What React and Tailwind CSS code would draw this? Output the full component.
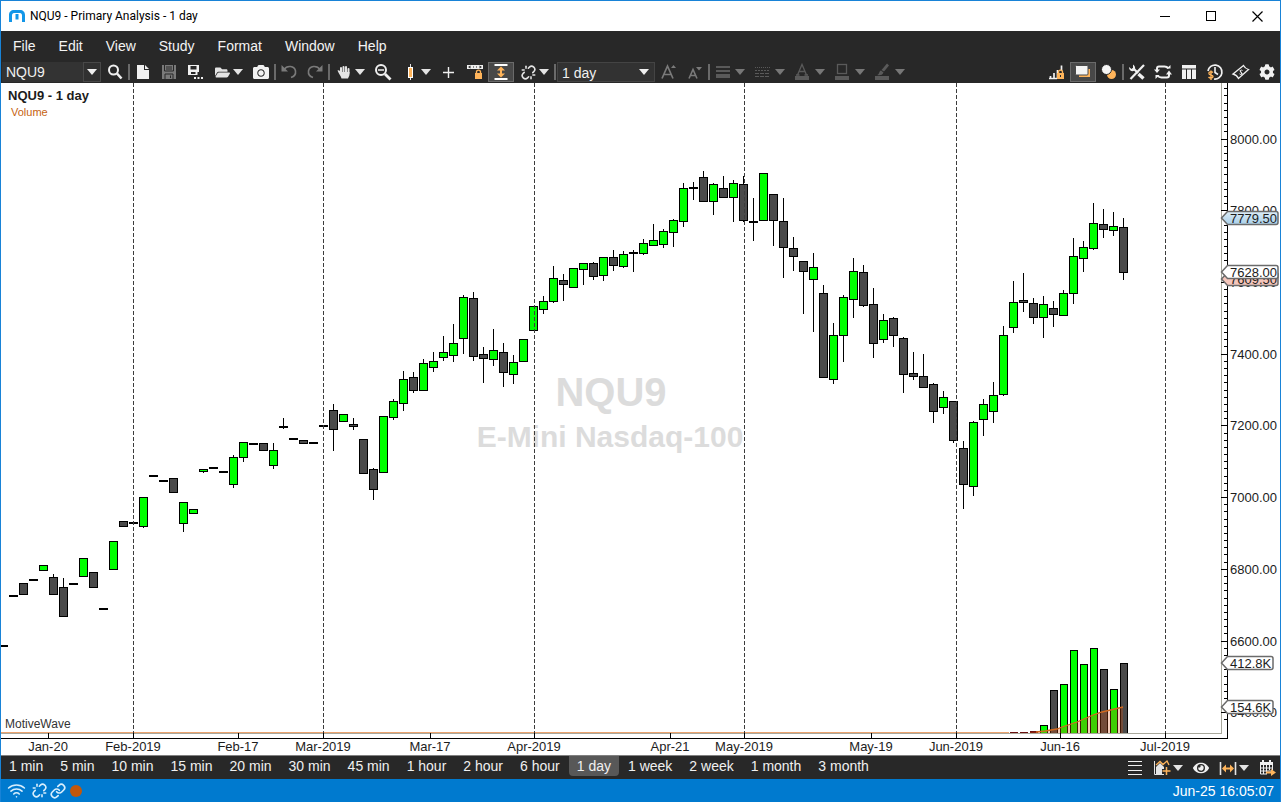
import { useState } from 'react'
import { Link, Unlink, Wifi } from 'lucide-react'
import { FaCamera, FaCog, FaEye, FaFolderOpen } from 'react-icons/fa'

const MENUS = ['File', 'Edit', 'View', 'Study', 'Format', 'Window', 'Help']

const TIMEFRAMES = [
  '1 min', '5 min', '10 min', '15 min', '20 min', '30 min', '45 min',
  '1 hour', '2 hour', '6 hour', '1 day', '1 week', '2 week', '1 month', '3 month',
]

// one bar every 10 units: [kind, body top, body bottom, high, low]
// u = up, d = down, x = open equals close
const BARS = [
  ['x', 645, 647], ['x', 595, 597], ['d', 583, 595], ['x', 579, 581], ['u', 565, 571],
  ['d', 577, 595, 574], ['d', 587, 617, 578], ['x', 583, 585], ['u', 558, 577], ['d', 572, 588],
  ['x', 608, 610], ['u', 541, 570], ['d', 521, 527], ['x', 522, 524], ['u', 497, 527, 497, 528],
  ['x', 475, 477], ['x', 480, 482], ['d', 478, 493], ['u', 502, 524, 502, 532], ['u', 509, 514],
  ['u', 469, 472, 469, 473], ['x', 467, 469], ['x', 471, 473], ['u', 457, 485, 455, 488], ['u', 442, 458, 442, 462],
  ['x', 443, 445], ['d', 443, 451], ['u', 450, 466, 443, 469], ['x', 426, 428, 418, 429], ['x', 438, 440],
  ['d', 440, 444], ['x', 442, 444], ['x', 425, 427], ['d', 410, 430, 404, 451], ['u', 414, 422],
  ['d', 424, 427, 418, 430], ['d', 439, 474], ['d', 469, 490, 468, 500], ['u', 416, 473], ['u', 401, 418, 399, 420],
  ['u', 379, 404, 371, 411], ['d', 377, 391, 372, 393], ['u', 363, 391, 359], ['u', 361, 368, 352, 372], ['u', 352, 358, 336, 361],
  ['u', 343, 356, 324, 362], ['u', 297, 339, 295, 354], ['d', 298, 357, 292, 361], ['d', 354, 359, 347, 383], ['u', 350, 360, 329, 366],
  ['d', 352, 373, 343, 387], ['u', 362, 375, 355, 384], ['u', 339, 362], ['u', 306, 331], ['u', 301, 310, 296, 314],
  ['u', 278, 302, 266, 303], ['d', 280, 285, 274, 301], ['u', 268, 288], ['u', 263, 270, 263, 285], ['d', 263, 277, 262, 280],
  ['u', 257, 276, 257, 281], ['d', 257, 266, 250, 271], ['u', 254, 267, 251, 268], ['x', 252, 254, 250, 272], ['u', 243, 254, 239, 255],
  ['u', 240, 246, 224], ['u', 231, 245, 229, 248], ['u', 220, 233, 219, 247], ['u', 188, 222, 183, 227], ['x', 187, 189, 182, 200],
  ['d', 177, 202, 171], ['u', 184, 202, 183, 215], ['d', 188, 198, 176], ['u', 183, 198, 180, 222], ['d', 184, 221, 176, 222],
  ['x', 221, 223, 198, 241], ['u', 173, 221], ['d', 194, 221, 194, 246], ['d', 221, 248, 198, 278], ['d', 248, 257, 237, 271],
  ['d', 261, 272, 261, 314], ['u', 267, 280, 253, 332], ['d', 293, 378, 285], ['u', 335, 380, 323, 384], ['u', 297, 336, 295, 362],
  ['u', 271, 300, 258, 318], ['d', 272, 306, 265, 307], ['d', 304, 344, 288, 358], ['u', 320, 340, 314, 343], ['d', 318, 336, 317, 347],
  ['d', 338, 375, 337, 393], ['d', 373, 377, 352, 380], ['d', 376, 388, 354], ['d', 384, 412, 383, 423], ['u', 397, 408, 391, 414],
  ['d', 401, 441, 401, 443], ['d', 448, 485, 441, 509], ['u', 422, 487, 421, 496], ['u', 404, 420, 399, 436], ['u', 395, 412, 382, 423],
  ['u', 335, 395, 326, 396], ['u', 302, 328, 281, 333], ['d', 300, 303, 273, 312], ['d', 303, 318, 298, 324], ['u', 304, 318, 296, 338],
  ['d', 308, 315, 301, 327], ['u', 293, 316, 290], ['u', 256, 294, 238, 304], ['u', 247, 259, 241, 272], ['u', 223, 249, 203, 250],
  ['d', 224, 230, 209, 238], ['u', 226, 231, 212, 236], ['d', 227, 273, 218, 280],
]

const VOLUME = [
  [1040, 725, 'u'], [1050, 690, 'd'], [1060, 684, 'u'], [1070, 650, 'u'], [1080, 664, 'u'],
  [1090, 648, 'u'], [1100, 669, 'd'], [1110, 689, 'u'], [1120, 663, 'd'],
]

const DATES = [
  [48, 'Jan-20'], [133, 'Feb-2019', true], [238, 'Feb-17'], [323, 'Mar-2019', true],
  [430, 'Mar-17'], [534, 'Apr-2019', true], [670, 'Apr-21'], [744, 'May-2019', true],
  [871, 'May-19'], [956, 'Jun-2019', true], [1060, 'Jun-16'], [1165, 'Jul-2019', true],
]

const COLORS = { u: '#00ff00', d: '#4a4a4a' }

const priceY = (price) => Math.floor(139 + (8000 - price) * 0.3586)

const PRICE_TICKS = []
for (let p = 8140; p >= 6380; p -= 20) PRICE_TICKS.push(p)

function Candle({ x, bar }) {
  const [kind, top, bottom, high = top, low = bottom] = bar
  return (
    <g>
      {low - high > bottom - top && <rect x={x} y={high} width="1" height={low - high} fill="#000" />}
      {kind === 'x' ? (
        <rect x={x - 4} y={top} width="9" height="2" fill="#000" />
      ) : (
        <rect x={x - 3.5} y={top + 0.5} width="8" height={bottom - top - 1} fill={COLORS[kind]} stroke="#000" />
      )}
    </g>
  )
}

function PriceTag({ y, right, fill, children }) {
  return (
    <g>
      <path
        d={`M1221.5 ${y + 7} L1227.5 ${y + 0.5} H${right - 2} Q${right} ${y + 0.5} ${right} ${y + 2.5} V${y + 11.5} Q${right} ${y + 13.5} ${right - 2} ${y + 13.5} H1227.5 Z`}
        fill={fill}
        stroke="#6b6b6b"
        strokeWidth="1.5"
      />
      <text x="1230" y={y + 12}>{children}</text>
    </g>
  )
}

function Chart() {
  return (
    <svg
      viewBox="1 83 1279 672"
      className="block w-full h-auto bg-white font-['Liberation_Sans',Arial,sans-serif] text-[13px]"
      role="img"
      aria-label="NQU9 daily chart"
    >
      <defs>
        <linearGradient id="bid" x1="0" y1="0" x2="0" y2="1">
          <stop offset="0" stopColor="#dcedf7" />
          <stop offset="1" stopColor="#a9cfe8" />
        </linearGradient>
      </defs>

      {/* Watermark */}
      <g fill="#dcdcdc" fontWeight="bold" textAnchor="middle">
        <text x="611" y="406" fontSize="40">NQU9</text>
        <text x="610" y="447" fontSize="30">E-Mini Nasdaq-100</text>
      </g>

      <g shapeRendering="crispEdges">
        {/* Volume */}
        <rect x="1010" y="732" width="8" height="1" fill="#6a1010" />
        <rect x="1020" y="732" width="8" height="1" fill="#6a1010" />
        <rect x="1030" y="731" width="8" height="2" fill="#6a1010" />
        {VOLUME.map(([x, top, kind]) => (
          <rect key={x} x={x + 0.5} y={top + 0.5} width="7" height={733 - top} fill={COLORS[kind]} stroke="#000" />
        ))}
        <rect x="1" y="733" width="1221" height="1" fill="#a8a89c" />
        <rect x="1" y="732" width="1008" height="1" fill="#eca36f" />
        <rect x="1221" y="83" width="1" height="651" fill="#a8a89c" />
      </g>
      <path d="M1030 732 L1045 731 L1057 729 L1062 727 L1077 722 L1093 715 L1102 712 L1123 707 V733 H1030 Z" fill="#e05010" fillOpacity="0.28" />
      <path d="M1036 732 L1045 731 L1057 729 L1062 727 L1077 722 L1093 715 L1102 712 L1123 707" fill="none" stroke="#d2691e" strokeWidth="1.3" />

      <g shapeRendering="crispEdges">
        {BARS.map((bar, i) => (
          <Candle key={i} x={i * 10 + 3} bar={bar} />
        ))}

        {/* Month lines */}
        {DATES.filter((d) => d[2]).map(([x]) => (
          <line key={x} x1={x + 0.5} x2={x + 0.5} y1="83" y2="733" stroke="#3c3c3c" strokeDasharray="4 2" />
        ))}

        {/* Axes */}
        <rect x="1227" y="83" width="1" height="656" fill="#000" />
        <rect x="1" y="738" width="1227" height="1" fill="#000" />
        {PRICE_TICKS.map((p) => (
          <rect
            key={p}
            x={p % 200 === 0 ? 1221 : 1224}
            y={priceY(p)}
            width={p % 200 === 0 ? 6 : 3}
            height="1"
            fill="#000"
          />
        ))}
        {DATES.map(([x]) => (
          <rect key={x} x={x} y="733" width="1" height="5" fill="#000" />
        ))}
      </g>

      <g fill="#1c1c1c">
        {DATES.map(([x, label]) => (
          <text key={label} x={x} y="751" textAnchor="middle">{label}</text>
        ))}
        {PRICE_TICKS.filter((p) => p % 200 === 0).map((p) => (
          <text key={p} x="1230" y={priceY(p) + 5}>{p}.00</text>
        ))}

        <PriceTag y={211} right={1278} fill="url(#bid)">7779.50</PriceTag>
        <PriceTag y={272} right={1278} fill="#f5c6bb">7609.50</PriceTag>
        <PriceTag y={265} right={1278} fill="#fff">7628.00</PriceTag>
        <PriceTag y={656} right={1273} fill="#fff">412.8K</PriceTag>
        <PriceTag y={700} right={1273} fill="#fff">154.6K</PriceTag>

        <text x="8" y="100" fontWeight="bold">NQU9 - 1 day</text>
        <text x="11" y="116" fontSize="11" fill="#c66210">Volume</text>
        <text x="5" y="728" fontSize="12" fill="#333">MotiveWave</text>
      </g>
    </svg>
  )
}

function Icon({ children, className = '' }) {
  return (
    <svg width="20" height="20" viewBox="0 0 20 20" fill="none" className={`shrink-0 ${className}`}>
      {children}
    </svg>
  )
}

function IconButton({ label, active, children }) {
  return (
    <button
      type="button"
      aria-label={label}
      className={`flex items-center justify-center w-[26px] h-5 shrink-0 overflow-hidden ${
        active ? 'bg-[#484848] border border-[#6a6a6a]' : ''
      }`}
    >
      {children}
    </button>
  )
}

// icon with a drop-down arrow beside it
function MenuButton({ label, disabled, children }) {
  return (
    <button
      type="button"
      aria-label={label}
      disabled={disabled}
      className={`flex items-center gap-px w-10 h-5 pl-1 shrink-0 ${disabled ? 'text-[#777]' : 'text-[#e4e4e4]'}`}
    >
      <span className={`flex justify-center w-5 shrink-0 ${disabled ? 'text-[#5a5a5a]' : ''}`}>{children}</span>
      <Arrow />
    </button>
  )
}

function Arrow() {
  return (
    <svg width="10" height="6" viewBox="0 0 10 6" fill="currentColor" className="shrink-0">
      <path d="M0 0h10L5 6z" />
    </svg>
  )
}

function Separator() {
  return <div className="w-0.5 h-4 bg-[#6a6a6a] shrink-0" />
}

function TitleBar() {
  return (
    <header className="flex items-center h-[30px] bg-white text-black">
      <svg width="16" height="13" viewBox="0 0 16 13" className="ml-2" fill="#1296e8">
        <path d="M0 12V5C0 2 2 0 5 0h6c3 0 5 2 5 5v7h-3V5.500C13 4 12.200 3 11 3H5C3.800 3 3 4 3 5.500V12z" />
        <rect x="6.500" y="4" width="3" height="5.500" />
      </svg>
      <h1 className="ml-[5px] flex-1 text-xs font-[Roboto,'Open_Sans',sans-serif]">
        NQU9 - Primary Analysis - 1 day
      </h1>
      <button type="button" aria-label="Minimize" className="flex justify-center w-[46px]">
        <svg width="11" height="11" shapeRendering="crispEdges"><path d="M0 5.500h10" stroke="#000" /></svg>
      </button>
      <button type="button" aria-label="Maximize" className="flex justify-center w-[46px]">
        <svg width="11" height="11" shapeRendering="crispEdges"><path d="M.5.500h9v9h-9z" fill="none" stroke="#000" /></svg>
      </button>
      <button type="button" aria-label="Close" className="flex justify-center w-[46px]">
        <svg width="11" height="11"><path d="M.5.500l10 10M10.500.500l-10 10" stroke="#000" strokeWidth="1.200" /></svg>
      </button>
    </header>
  )
}

function Toolbar({ timeframe, onTimeframe }) {
  const [symbol, setSymbol] = useState('NQU9')

  return (
    <div className="flex items-center h-[23px] pt-px bg-[#282828] text-[#f0f0f0] text-sm">
      <div className="flex h-5 w-[99px] mr-px ml-px shrink-0">
        <input
          aria-label="Symbol"
          value={symbol}
          onChange={(e) => setSymbol(e.target.value)}
          className="flex-1 min-w-0 pl-1 bg-[#333] outline-none"
        />
        <button type="button" aria-label="Recent symbols"
          className="flex items-center justify-center w-[18px] border border-[#484848] bg-[#303030]">
          <Arrow />
        </button>
      </div>

      <IconButton label="Find symbol">
        <Icon>
          <circle cx="8.500" cy="8" r="4.500" stroke="currentColor" strokeWidth="2" />
          <path d="M12 11.500l4.500 5" stroke="currentColor" strokeWidth="2.600" />
        </Icon>
      </IconButton>
      <Separator />
      <IconButton label="New chart">
        <Icon><path d="M4 3h7v5h5v9H4zM12 3l4 4h-4z" fill="currentColor" /></Icon>
      </IconButton>
      <IconButton label="Save">
        <Icon>
          <path d="M3 3h14v14H3z" fill="#7a7a7a" />
          <path d="M5.500 3v6h9V3M6 17v-5h8v5" stroke="#282828" />
          <path d="M7 5h6M7 7h6M11.500 13.500V16" stroke="#282828" />
        </Icon>
      </IconButton>
      <IconButton label="Save as">
        <Icon>
          <path d="M3 3h11v7h-1.500v3H3z" fill="currentColor" />
          <path d="M5.500 4h6v3.500h-6zM6 10h4.500v2H6z" fill="#282828" />
          <path d="M9 15h2v2H9zM12.500 15h2v2h-2zM16 15h2v2h-2z" fill="currentColor" />
        </Icon>
      </IconButton>
      <MenuButton label="Open"><FaFolderOpen size={15} /></MenuButton>
      <IconButton label="Snapshot"><FaCamera size={16} /></IconButton>
      <Separator />
      <IconButton label="Undo">
        <Icon className="text-[#7a7a7a]">
          <path d="M5 7.500C8 3 15.500 3.500 16.500 9c.4 3-1.500 5.500-4.500 6.500" stroke="currentColor" strokeWidth="1.600" />
          <path d="M2.500 3v6.500H9z" fill="currentColor" />
        </Icon>
      </IconButton>
      <IconButton label="Redo">
        <Icon className="text-[#7a7a7a]">
          <path d="M15 7.500C12 3 4.500 3.500 3.500 9c-.4 3 1.500 5.500 4.500 6.500" stroke="currentColor" strokeWidth="1.600" />
          <path d="M17.500 3v6.500H11z" fill="currentColor" />
        </Icon>
      </IconButton>
      <Separator />
      <MenuButton label="Pan">
        <Icon>
          <path d="M7 6v5M9.500 5v5M12 5v5M14.500 7v4" stroke="currentColor" strokeWidth="2" strokeLinecap="round" />
          <path d="M3.500 8.500c1.500-.8 2.500.5 3.500 1.500h8.500v2.500c0 1.500-1 2.500-1.500 4H7.500c-.5-2.500-2.500-4-4-8z" fill="currentColor" />
        </Icon>
      </MenuButton>
      <IconButton label="Zoom out">
        <Icon>
          <circle cx="8" cy="8" r="5" stroke="currentColor" strokeWidth="2" />
          <path d="M5 8h6" stroke="currentColor" strokeWidth="1.500" />
          <path d="M12 12l5.500 5.500" stroke="currentColor" strokeWidth="2.800" />
        </Icon>
      </IconButton>
      <MenuButton label="Bar type">
        <Icon>
          <path d="M10.500 2v16" stroke="currentColor" />
          <rect x="8.500" y="5.500" width="4" height="10" fill="#ffb45a" stroke="#fff" />
        </Icon>
      </MenuButton>
      <IconButton label="Crosshair">
        <Icon><path d="M9.500 5v11M4 10.500h11" stroke="currentColor" strokeWidth="1.400" /></Icon>
      </IconButton>
      <IconButton label="Lock time axis">
        <Icon>
          <path d="M2 3h16v4H2z" fill="currentColor" />
          <path d="M3 5l2.500-1.500v3zM17 5l-2.500-1.500v3zM8 4.500h1v1H8zM11 4.500h1v1h-1z" fill="#282828" />
          <rect x="10" y="11" width="7" height="6" fill="#ffb45a" />
          <path d="M11.500 11.500V10c0-2.500 4-2.500 4 0v1.500" stroke="#ffb45a" strokeWidth="1.400" />
        </Icon>
      </IconButton>
      <IconButton label="Auto scale" active>
        <Icon>
          <path d="M3.500 3h13M3.500 17h13" stroke="#fff" strokeWidth="2" />
          <path d="M10 6v8" stroke="#ffb45a" strokeWidth="2" />
          <path d="M10 4.500l4 4H6zM10 15.500l4-4H6z" fill="#ffb45a" />
        </Icon>
      </IconButton>
      <MenuButton label="Unlinked"><Unlink size={15} strokeWidth={2.500} /></MenuButton>
      <Separator />

      <div className="relative flex h-5 w-[98px] ml-px mr-px shrink-0">
        <select
          aria-label="Bar size"
          value={timeframe}
          onChange={(e) => onTimeframe(e.target.value)}
          className="w-full pl-1 appearance-none bg-[#323232] border border-[#444] outline-none"
        >
          {TIMEFRAMES.map((t) => <option key={t}>{t}</option>)}
        </select>
        <span className="absolute right-1.5 top-[7px] pointer-events-none"><Arrow /></span>
      </div>

      <IconButton label="Larger text">
        <Icon className="text-[#7a7a7a]">
          <path d="M3 16.500L8.500 4l5.500 12.500M5 12.500h7" stroke="currentColor" strokeWidth="1.700" />
          <path d="M12 6l2.500-3L17 6z" fill="currentColor" />
        </Icon>
      </IconButton>
      <IconButton label="Smaller text">
        <Icon className="text-[#7a7a7a]">
          <path d="M4 16.500L8 7.500l4 9M5.500 13.500h5.500" stroke="currentColor" strokeWidth="1.600" />
          <path d="M11 5h6l-3 3.500z" fill="currentColor" />
        </Icon>
      </IconButton>
      <Separator />
      <MenuButton label="Line width" disabled>
        <Icon>
          <path d="M2 5h14M2 9h14" stroke="currentColor" strokeWidth="2" />
          <path d="M2 12h14v4H2z" fill="currentColor" />
        </Icon>
      </MenuButton>
      <MenuButton label="Line style" disabled>
        <Icon>
          <path d="M1 5.500h15" stroke="currentColor" strokeDasharray="1 1" />
          <path d="M1 8.500h15" stroke="currentColor" strokeDasharray="2 1" />
          <path d="M1 11.500h15M1 14.500h15" stroke="currentColor" strokeDasharray="4 1" />
        </Icon>
      </MenuButton>
      <MenuButton label="Text color" disabled>
        <Icon>
          <path d="M3.500 13L8 2.500 12.500 13M5 9.500h6M2 13h3.500M10.500 13H14" stroke="currentColor" strokeWidth="1.300" />
          <path d="M1 14h14v4H1z" fill="currentColor" />
        </Icon>
      </MenuButton>
      <MenuButton label="Fill color" disabled>
        <Icon>
          <rect x="3.500" y="2.500" width="9" height="9" stroke="currentColor" strokeWidth="1.300" />
          <path d="M1 14h14v4H1z" fill="currentColor" />
        </Icon>
      </MenuButton>
      <MenuButton label="Line color" disabled>
        <Icon>
          <path d="M13 1.500L15 3.500l-5 6L7.500 8zM7 8.500l2.500 2c-1 3-4 3-6.500 2.500 2.500-.5 2-4 4-4.500z" fill="currentColor" />
          <path d="M1 14h14v4H1z" fill="currentColor" />
        </Icon>
      </MenuButton>

      <div className="flex items-center ml-auto">
        <IconButton label="Lock studies">
          <Icon>
            <path d="M3.500 17v-3M7 17v-6M10.500 17V8M14.500 9V3.500M2 16.500h8" stroke="currentColor" strokeWidth="1.700" />
            <rect x="10" y="11" width="7" height="6" fill="#ffb45a" />
            <path d="M11.500 11.500V10c0-2.500 4-2.500 4 0v1.500" stroke="#ffb45a" strokeWidth="1.400" />
            <path d="M13.500 13v2" stroke="#282828" />
          </Icon>
        </IconButton>
        <IconButton label="Shadows" active>
          <Icon>
            <rect x="6" y="7" width="11" height="8" fill="#ffb45a" />
            <rect x="2.500" y="3.500" width="12.500" height="9.500" rx="1" fill="#f4f4f4" stroke="#484848" />
          </Icon>
        </IconButton>
        <IconButton label="Overlays">
          <Icon>
            <circle cx="12.500" cy="12.500" r="4.500" fill="#ffb45a" />
            <circle cx="7.500" cy="7.500" r="5" fill="#f4f4f4" stroke="#282828" />
          </Icon>
        </IconButton>
        <Separator />
        <IconButton label="Tools">
          <Icon>
            <path d="M3.500 17L17 3" stroke="currentColor" strokeWidth="2.200" />
            <path d="M6 6l5 5" stroke="currentColor" strokeWidth="2.200" />
            <path d="M11.500 12l5 4.500" stroke="currentColor" strokeWidth="3.400" />
            <path d="M2 5c0 4 3.500 5 5 3.800 1.800-1.500 1.500-4.800-1-6.300v3.500L4.500 7z" fill="currentColor" />
          </Icon>
        </IconButton>
        <IconButton label="Refresh">
          <Icon>
            <path d="M4 8V6.500Q4 4.500 6 4.500h5.500Q14 4.500 15.500 6.500M16 12v1.500q0 2-2 2H8.500Q6 15.500 4.500 13.500" stroke="currentColor" strokeWidth="2" />
            <path d="M1 7.500h6l-3 3.500zM13 12.500h6l-3-4zM13.500 6.500h4V3zM2.500 17v-4h4z" fill="currentColor" />
          </Icon>
        </IconButton>
        <IconButton label="Columns">
          <Icon>
            <path d="M3 3h14v3.500H3z" fill="currentColor" />
            <path d="M3 7.500h4V17H3zM8 7.500h4V17H8zM13 7.500h4V17h-4z" fill="currentColor" />
          </Icon>
        </IconButton>
        <IconButton label="Trade history">
          <Icon>
            <path d="M3 9a7 7 0 1 1 6 8" stroke="currentColor" strokeWidth="1.700" />
            <path d="M10 5v5.500l3 2" stroke="currentColor" strokeWidth="1.600" />
            <path d="M8 10.500C6 9 3.500 10 4 11.700c.5 1.500 4 .8 4 2.800 0 1.700-3 2-4.500.5M6 8.500V18" stroke="#ffb45a" strokeWidth="1.400" />
          </Icon>
        </IconButton>
        <IconButton label="Trade">
          <Icon>
            <path d="M2 12L12.500 3.500q1.500 3 5 4L7.500 16.500Q6 13 2 12z" stroke="currentColor" strokeWidth="1.300" />
            <path d="M11.500 8.500c-1-1-3 0-2 1.300s2 .8 1.500 2-2 .7-2.500 0M9 8l2 4.500" stroke="currentColor" />
          </Icon>
        </IconButton>
        <IconButton label="Settings"><FaCog size={16} /></IconButton>
      </div>
    </div>
  )
}

function TimeframeBar({ timeframe, onTimeframe }) {
  return (
    <div className="flex items-start h-6 border-t border-[#808080] bg-[#282828] text-[#f0f0f0] text-sm">
      <nav className="flex gap-px">
        {TIMEFRAMES.map((t) => (
          <button
            key={t}
            type="button"
            onClick={() => onTimeframe(t)}
            className={`h-5 px-2 rounded-b whitespace-nowrap ${t === timeframe ? 'bg-[#585858]' : ''}`}
          >
            {t}
          </button>
        ))}
      </nav>
      <div className="flex items-center h-[23px] ml-auto">
        <IconButton label="List">
          <Icon><path d="M3 3.500h14M3 7.500h14M3 12.500h14M3 16.500h14" stroke="currentColor" shapeRendering="crispEdges" /></Icon>
        </IconButton>
        <MenuButton label="Add study">
          <Icon>
            <path d="M2.500 3v13.500H12" stroke="currentColor" />
            <path d="M4 16V9l4-4 4 4v2h-2v5z" fill="currentColor" />
            <path d="M4 7l4-3.500 3 3L15 3l2 4" stroke="#ffb45a" strokeWidth="1.300" />
            <path d="M14.500 9v8M10.500 13h8" stroke="#ffb45a" strokeWidth="1.500" />
          </Icon>
        </MenuButton>
        <IconButton label="Show"><FaEye size={16} /></IconButton>
        <MenuButton label="Range">
          <Icon>
            <path d="M2.500 4v13M17.500 4v13" stroke="currentColor" strokeWidth="1.600" />
            <path d="M6 10.500h8" stroke="#ffb45a" strokeWidth="2" />
            <path d="M4 10.500l4-4v8zM16 10.500l-4-4v8z" fill="#ffb45a" />
          </Icon>
        </MenuButton>
        <IconButton label="Go to date">
          <Icon>
            <path d="M3 4h13v3H3zM5 2h2v3H5zM12 2h2v3h-2z" fill="currentColor" />
            <path d="M3.500 7v9H10M3.500 10h12M3.500 13h12M6.500 7v9M9.500 7v9M12.500 7v5M15.500 7v5" stroke="currentColor" />
            <path d="M9 13.500h5V11l5 3.500-5 3.500v-2.500H9z" fill="#ffb45a" />
          </Icon>
        </IconButton>
      </div>
    </div>
  )
}

function StatusBar() {
  return (
    <footer className="flex items-center h-[23px] px-1.5 bg-[#007acf] text-white text-sm">
      <div className="flex items-center flex-1 text-[#d8eefc]">
        <Wifi size={19} className="mr-1.5" />
        <Unlink size={15} strokeWidth={2.500} className="mr-[3px]" />
        <Link size={16} strokeWidth={2.500} className="mr-1" />
        <span className="w-3 h-3 rounded-full bg-[#c2570c]" />
      </div>
      <time>Jun-25 16:05:07</time>
    </footer>
  )
}

function App() {
  const [timeframe, setTimeframe] = useState('1 day')

  return (
    <div className="border-t border-x border-[#1883d7] font-['Liberation_Sans',Arial,sans-serif]">
      <TitleBar />
      <nav className="flex items-center gap-[23px] h-[29px] pl-3 bg-[#282828] text-[#f4f4f4] text-sm">
        {MENUS.map((m) => <button key={m} type="button">{m}</button>)}
      </nav>
      <Toolbar timeframe={timeframe} onTimeframe={setTimeframe} />
      <main>
        <Chart />
      </main>
      <TimeframeBar timeframe={timeframe} onTimeframe={setTimeframe} />
      <StatusBar />
    </div>
  )
}

export default App
